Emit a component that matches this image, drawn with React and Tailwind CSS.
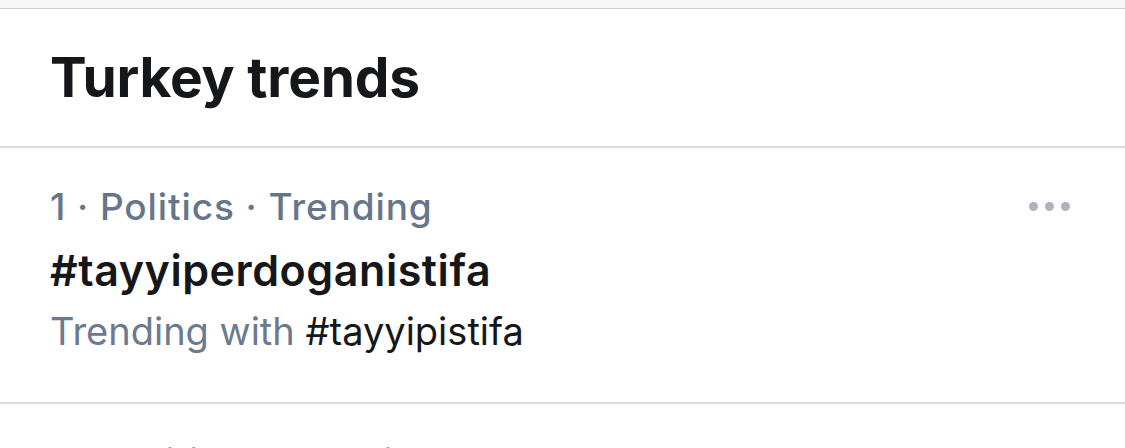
export default function App() {
  return (
    <div className="w-[1125px] h-[448px] overflow-hidden bg-white font-['Inter',sans-serif]">
      {/* top strip */}
      <div className="h-[9px] bg-[#f6f7f9] border-b border-[#cfd2d5]" />

      {/* header */}
      <div className="h-[139px] flex items-center px-[50px] border-b-2 border-[#d9dcdf]">
        <h1 className="text-[55px] leading-none font-bold tracking-[-0.2px] text-[#16171a]">Turkey trends</h1>
      </div>

      {/* trend row */}
      <div className="flex items-start justify-between pl-[50px] pr-[55px] pt-[37px] pb-[45px] border-b-2 border-[#d9dcdf]">
        <div className="flex flex-col">
          <div className="text-[37px] leading-[44px] font-medium tracking-[0.9px] text-[#66758a]">1 · Politics · Trending</div>
          <div className="mt-[15px] text-[43px] leading-[52px] font-semibold tracking-[0.55px] text-[#16171a]">#tayyiperdoganistifa</div>
          <div className="mt-[9px] text-[38px] leading-[52px] text-[#6b7a8f]">
            Trending with <span className="text-[#16171a]">#tayyipistifa</span>
          </div>
        </div>
        <div className="flex gap-[7px] mt-[17px]">
          <span className="w-[9px] h-[9px] rounded-full bg-[#aab4c0]" />
          <span className="w-[9px] h-[9px] rounded-full bg-[#aab4c0]" />
          <span className="w-[9px] h-[9px] rounded-full bg-[#aab4c0]" />
        </div>
      </div>

      {/* next row (cut off) */}
      <div className="pl-[50px] pt-[36px]">
        <div className="text-[37px] leading-[44px] font-medium tracking-[0.9px] text-[#66758a]">2 · Politics · Trending</div>
      </div>
    </div>
  )
}
